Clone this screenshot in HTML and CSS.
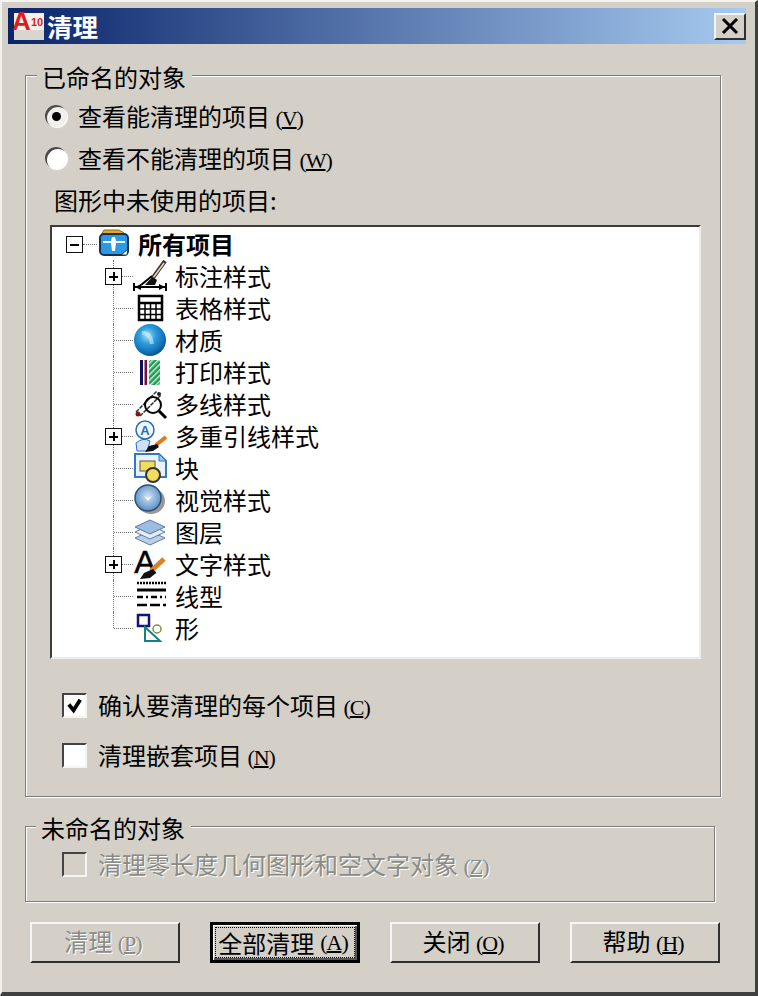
FILE: index.html
```html
<!DOCTYPE html>
<html lang="zh-CN">
<head>
<meta charset="utf-8">
<title>清理</title>
<link rel="stylesheet" href="styles.css">
</head>
<body>
<div class="window">
  <header class="titlebar">
    <svg class="app-icon" viewBox="0 0 32 34"><rect x="1" y="4" width="30" height="27" fill="#f4f1ea"/><rect x="1" y="21" width="30" height="10" fill="#d9d6cf"/><text x="-1" y="21" class="app-a">A</text><text x="18" y="17" class="app-num">10</text></svg>
    <span class="title">清理</span>
    <span class="close"><svg viewBox="0 0 18 16"><path d="M2 1 16 15M16 1 2 15" stroke="#000" stroke-width="3" fill="none"/></svg></span>
  </header>

  <section class="group group-named">
    <div class="legend">已命名的对象</div>
    <label class="opt radio-row first"><i class="radio on"></i><span>查看能清理的项目 <em>(<u>V</u>)</em></span></label>
    <label class="opt radio-row"><i class="radio"></i><span>查看不能清理的项目 <em>(<u>W</u>)</em></span></label>
    <div class="opt caption"><span>图形中未使用的项目:</span></div>

    <div class="list">
      <div class="row root">
        <div class="twig"><b class="box minus"></b></div>
        <svg class="ico" viewBox="0 0 36 32"><path d="M4 7 7 2h15l5 3v6H4z" fill="#e3a92b" stroke="#8a6a1c"/><rect x="3" y="6" width="28" height="21" rx="4" fill="#2a9ae6" stroke="#17324f" stroke-width="2"/><path d="M6 13h8l1-4h3l1 4h9v2h-9l-1 8h-3l-1-8H6z" fill="#fff"/><path d="M24 27h6l1-6z" fill="#fff" stroke="#17324f"/></svg>
        <span class="name">所有项目</span>
      </div>
      <div class="row">
        <div class="twig"><b class="box plus"></b></div>
        <svg class="ico" viewBox="0 0 36 32"><path d="M32 1 19 19" stroke="#3c3228" stroke-width="4"/><path d="M31 3 20 18" stroke="#e8d9c3" stroke-width="1.500"/><path d="M19 16 8 25" fill="none" stroke="#000" stroke-width="2"/><path d="M12 25q5-6 8-8l4 3-2 5z" fill="#111"/><path d="M2 27h30" stroke="#000" stroke-width="2"/><path d="M1 23v8M33 23v8" stroke="#000" stroke-width="2"/><path d="M2 27l6-3v6zM32 27l-6-3v6z" fill="#000"/></svg>
        <span>标注样式</span>
      </div>
      <div class="row">
        <div class="twig"></div>
        <svg class="ico" viewBox="0 0 36 32"><path d="M5 4h25M5 11h25M5 28h25M6 3v26M29 3v26" stroke="#000" stroke-width="2.500" fill="none"/><path d="M6 17h23M6 22.500h23M12 11v17M17.500 11v17M23 11v17" stroke="#000" stroke-width="1.500"/></svg>
        <span>表格样式</span>
      </div>
      <div class="row">
        <div class="twig"></div>
        <svg class="ico" viewBox="0 0 36 32"><defs><radialGradient id="globe" cx=".42" cy=".36" r=".72"><stop offset="0" stop-color="#a9e2f6"/><stop offset=".35" stop-color="#2f9fdd"/><stop offset=".75" stop-color="#0f6db5"/><stop offset="1" stop-color="#0a3f78"/></radialGradient></defs><circle cx="17" cy="16" r="16" fill="url(#globe)"/><path d="M9 9q8-1 10 11" stroke="#d8f3fb" stroke-opacity=".55" stroke-width="4" fill="none"/></svg>
        <span>材质</span>
      </div>
      <div class="row">
        <div class="twig"></div>
        <svg class="ico" viewBox="0 0 36 32"><defs><pattern id="hatch" width="4" height="4" patternUnits="userSpaceOnUse" patternTransform="rotate(-45)"><rect width="4" height="4" fill="#1f9a52"/><rect width="4" height="1.500" fill="#c8eed5"/></pattern></defs><rect x="7" y="4" width="3" height="25" fill="#101060"/><rect x="11.500" y="4" width="2.500" height="25" fill="#7a1030"/><rect x="16" y="4" width="11" height="25" rx="2" fill="url(#hatch)"/></svg>
        <span>打印样式</span>
      </div>
      <div class="row">
        <div class="twig"></div>
        <svg class="ico" viewBox="0 0 36 32"><path d="M3 24 24 3M7 28 28 7" stroke="#333" stroke-width="1.500" stroke-dasharray="4 1"/><circle cx="20" cy="17" r="8" fill="none" stroke="#000" stroke-width="2"/><path d="M26 23 33 30" stroke="#000" stroke-width="3"/><circle cx="5" cy="26" r="2.500" fill="#7a1a1a"/><circle cx="26" cy="6" r="2" fill="#222"/></svg>
        <span>多线样式</span>
      </div>
      <div class="row">
        <div class="twig"><b class="box plus"></b></div>
        <svg class="ico" viewBox="0 0 36 32"><circle cx="12" cy="10" r="9" fill="#eef6fc" stroke="#2b6cb5" stroke-width="1.500"/><text x="12" y="15" class="ico-a">A</text><path d="M3 23q7-6 14-2l-3 10H4z" fill="#cfe2f5" stroke="#2b6cb5"/><path d="M33 17 23 25" stroke="#d97b20" stroke-width="4"/><path d="M24 24l-8 2-4 6 8-1 6-4z" fill="#111"/></svg>
        <span>多重引线样式</span>
      </div>
      <div class="row">
        <div class="twig"></div>
        <svg class="ico" viewBox="0 0 36 32"><path d="M2 2h24l7 7v16H2z" fill="#e8f2fb" stroke="#3278c0" stroke-width="2"/><path d="M26 2v7h7z" fill="#9cc6ea" stroke="#3278c0"/><rect x="7" y="9" width="15" height="10" fill="#f2dd5a" stroke="#555"/><circle cx="20" cy="23" r="7" fill="#f2dd5a" stroke="#333" stroke-width="2"/></svg>
        <span>块</span>
      </div>
      <div class="row">
        <div class="twig"></div>
        <svg class="ico" viewBox="0 0 36 32"><ellipse cx="18" cy="17" rx="14" ry="13" fill="#999"/><defs><radialGradient id="vis" cx=".5" cy=".45" r=".6"><stop offset="0" stop-color="#cfe3f6"/><stop offset="1" stop-color="#4f86bd"/></radialGradient></defs><circle cx="15" cy="14" r="13" fill="url(#vis)" stroke="#2a4f78" stroke-width="1.500"/><path d="M11 12l4 5 4-5-4 2z" fill="#fff"/></svg>
        <span>视觉样式</span>
      </div>
      <div class="row">
        <div class="twig"></div>
        <svg class="ico" viewBox="0 0 36 32"><path d="M2 22 17 15l15 7-15 7z" fill="#b8cfe9" stroke="#5d7ba0"/><path d="M2 16 17 9l15 7-15 7z" fill="#e4edf6" stroke="#5d7ba0"/><path d="M2 11 17 4l15 7-15 7z" fill="#9dbce3" stroke="#5d7ba0"/></svg>
        <span>图层</span>
      </div>
      <div class="row">
        <div class="twig"><b class="box plus"></b></div>
        <svg class="ico" viewBox="0 0 36 32"><text x="12" y="25" class="ico-big">A</text><path d="M31 11 18 23" stroke="#d9822b" stroke-width="5"/><path d="M20 21l-9 4-4 6 10-1 6-5z" fill="#111"/></svg>
        <span>文字样式</span>
      </div>
      <div class="row">
        <div class="twig"></div>
        <svg class="ico" viewBox="0 0 36 32"><path d="M4 3h29" stroke="#000" stroke-width="2.500" stroke-dasharray="2 1"/><path d="M4 10h29" stroke="#000" stroke-width="3"/><path d="M4 17h29" stroke="#000" stroke-width="2.500" stroke-dasharray="6 3 2 3"/><path d="M4 25h29" stroke="#000" stroke-width="2.500" stroke-dasharray="10 3"/></svg>
        <span>线型</span>
      </div>
      <div class="row last">
        <div class="twig"></div>
        <svg class="ico" viewBox="0 0 36 32"><rect x="5" y="3" width="11" height="11" fill="#fff" stroke="#12127a" stroke-width="2.500"/><path d="M12 15v14h15z" fill="#fff" stroke="#157f86" stroke-width="2"/><circle cx="24" cy="17" r="4" fill="#fff" stroke="#8c8c50" stroke-width="1.500"/></svg>
        <span>形</span>
      </div>
    </div>

    <label class="opt check-row check-first"><i class="check on"><svg viewBox="0 0 20 20"><path d="M4 9l5 6 7-11" stroke="#000" stroke-width="4" fill="none"/></svg></i><span>确认要清理的每个项目 <em>(<u>C</u>)</em></span></label>
    <label class="opt check-row check-second"><i class="check"></i><span>清理嵌套项目 <em>(<u>N</u>)</em></span></label>
  </section>

  <section class="group group-unnamed">
    <div class="legend">未命名的对象</div>
    <label class="opt check-row disabled"><i class="check off"></i><span>清理零长度几何图形和空文字对象 <em>(<u>Z</u>)</em></span></label>
  </section>

  <footer class="buttons">
    <button class="btn is-disabled" type="button">清理 <em>(<u>P</u>)</em></button>
    <button class="btn is-default" type="button"><span>全部清理 <em>(<u>A</u>)</em></span></button>
    <button class="btn" type="button">关闭 <em>(<u>O</u>)</em></button>
    <button class="btn" type="button">帮助 <em>(<u>H</u>)</em></button>
  </footer>
</div>
</body>
</html>
```

FILE: styles.css
```css
* { box-sizing: border-box; }
html, body { margin: 0; padding: 0; }
body {
  width: 758px;
  height: 996px;
  overflow: hidden;
  background: #d4d0c8;
  font-family: "Noto Sans CJK SC", "Liberation Sans", sans-serif;
  font-size: 24px;
  color: #000;
}
.window {
  width: 758px;
  height: 996px;
  padding: 6px 9px 0 6px;
  border-top: 2px solid #f6f4f0;
  border-left: 2px solid #f2f0ea;
  border-right: 3px solid #404040;
  border-bottom: 4px solid #404040;
  background: #d4d0c8;
}
em { font-style: normal; font-family: "Liberation Serif", serif; font-size: 22px; letter-spacing: -1px; }
u { text-underline-offset: 1px; }

.titlebar {
  height: 36px;
  display: flex;
  align-items: center;
  padding: 0 0 0 5px;
  background: linear-gradient(90deg, #0a246a, #a6caf0);
}
.app-icon { width: 32px; height: 34px; flex: none; overflow: visible; }
.app-a { font: 700 26px "Liberation Sans", sans-serif; fill: #d81e1e; }
.app-num { font: 700 11px "Liberation Sans", sans-serif; fill: #d81e1e; }
.title {
  margin-left: 2px;
  font-size: 25.500px;
  line-height: 36px;
  font-weight: 700;
  color: #fff;
}
.close {
  margin-left: auto;
  width: 32px;
  height: 27px;
  display: flex;
  align-items: center;
  justify-content: center;
  background: #d4d0c8;
  border: 2px solid;
  border-color: #f4f4f4 #303030 #303030 #f4f4f4;
}
.close svg { width: 18px; height: 16px; }

.group {
  margin-left: 17px;
  border: 1px solid #7c7c7c;
  box-shadow: 1px 1px 0 #fff, inset 1px 1px 0 #fff;
}
.group-named { margin-top: 31px; width: 696px; height: 722px; }
.group-unnamed { margin-top: 29px; width: 690px; height: 76px; }
.legend {
  width: fit-content;
  margin: -15px 0 2px 11px;
  padding: 0 6px 0 5px;
  line-height: 32px;
  background: #d4d0c8;
}
.group-unnamed .legend { margin-left: 10px; }

.opt { display: flex; align-items: center; height: 32px; white-space: nowrap; }
.opt span, .row span { align-self: flex-start; line-height: 31px; }
.radio-row { padding-left: 19px; margin-top: 10px; }
.radio-row.first { margin-top: 7px; }
.caption { padding-left: 28px; margin-top: 10px; }
.radio {
  flex: none;
  width: 22px;
  height: 22px;
  margin-right: 11px;
  border-radius: 50%;
  background: #fff;
  box-shadow: inset 2px 2px 0 #4a4a4a, 1px 1px 1px #fff;
  position: relative;
}
.radio.on { background: #f2f0ec; }
.radio.on::after {
  content: "";
  position: absolute;
  left: 7px;
  top: 7px;
  width: 9px;
  height: 9px;
  border-radius: 50%;
  background: #000;
}

.list {
  width: 651px;
  height: 434px;
  margin: 9px 0 0 24px;
  padding-top: 1px;
  background: #fff;
  border: 2px solid;
  border-color: #3c3c3c #ececec #ececec #3c3c3c;
}
.row {
  display: flex;
  align-items: center;
  height: 32px;
}
.twig {
  position: relative;
  flex: none;
  width: 81px;
  height: 32px;
}
.twig::before {
  content: "";
  position: absolute;
  left: 61px;
  top: 0;
  bottom: 0;
  border-left: 1px dotted #777;
}
.twig::after {
  content: "";
  position: absolute;
  left: 62px;
  right: 0;
  top: 16px;
  border-top: 1px dotted #777;
}
.last .twig::before { bottom: 16px; }
.ico { flex: none; width: 36px; height: 32px; margin-right: 6px; overflow: visible; }
.ico-a { font: 700 13px "Liberation Sans", sans-serif; fill: #2b6cb5; text-anchor: middle; }
.ico-big { font: 400 32px "Liberation Sans", sans-serif; fill: #000; stroke: #000; stroke-width: .5px; text-anchor: middle; }

.root .twig { width: 45px; }
.root .twig::before { display: none; }
.root .twig::after { left: 31px; }
.root .ico { margin-right: 5px; }
.name { font-weight: 700; }

.box {
  position: absolute;
  z-index: 1;
  left: 53px;
  top: 8px;
  width: 17px;
  height: 17px;
  border: 1px solid #111;
  background-color: #fff;
  background-repeat: no-repeat;
  background-position: center;
}
.plus { background-image: linear-gradient(#000, #000), linear-gradient(#000, #000); background-size: 9px 2px, 2px 9px; }
.minus { left: 14px; background-image: linear-gradient(#000, #000); background-size: 9px 2px; }

.check-row { padding-left: 36px; }
.check-first { margin-top: 30px; }
.check-second { margin-top: 18px; }
.check {
  flex: none;
  display: block;
  width: 25px;
  height: 25px;
  margin-right: 11px;
  padding: 1px;
  background: #fff;
  border: 2px solid;
  border-color: #444 #f4f4f4 #f4f4f4 #444;
}
.check svg { display: block; width: 19px; height: 19px; }
.check.off { background: #d4d0c8; }
.disabled { margin-top: 4px; }
.disabled span, .is-disabled { color: #8a8a86; text-shadow: 1px 1px 0 #fff; }

.buttons {
  display: flex;
  gap: 30px;
  margin: 20px 0 0 22px;
}
.btn {
  width: 150px;
  height: 41px;
  padding: 0 4px 2px 0;
  font: inherit;
  line-height: 1;
  color: #000;
  background: #d4d0c8;
  border: 2px solid;
  border-color: #f6f6f6 #303030 #303030 #f6f6f6;
}
.btn.is-disabled { color: #8a8a86; }
.is-default {
  width: 150px;
  padding: 0;
  border: 3px solid #000;
  box-shadow: inset 1px 1px 0 #fff, inset -2px -2px 0 #555;
}
.is-default span {
  display: flex;
  align-items: center;
  justify-content: center;
  gap: 6px;
  height: 29px;
  margin: 3px;
  padding-right: 4px;
  outline: 1px dotted #000;
}
```
